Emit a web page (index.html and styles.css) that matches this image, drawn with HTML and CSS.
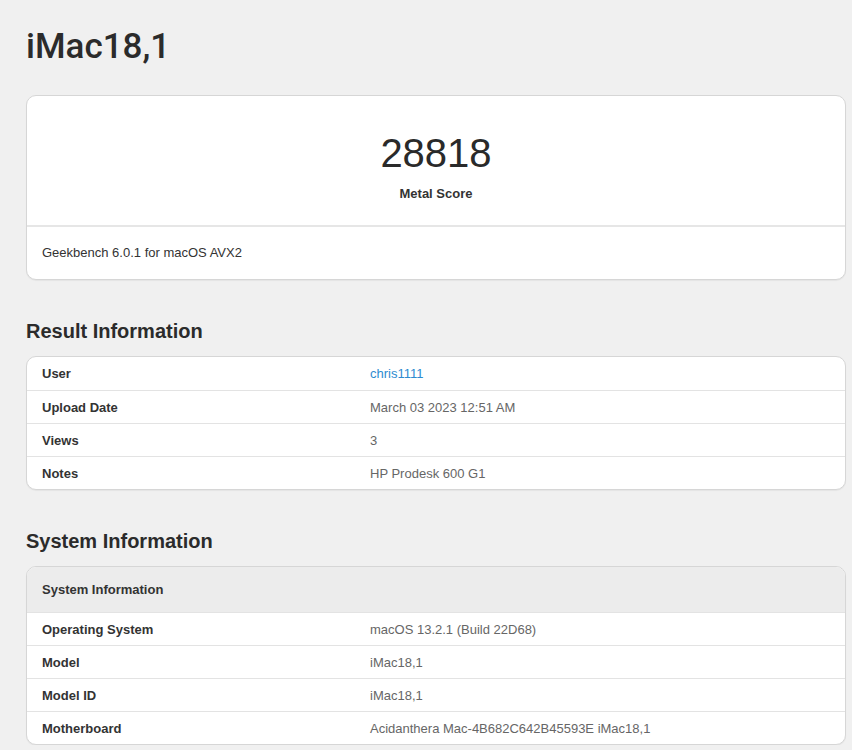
FILE: index.html
```html
<!DOCTYPE html>
<html lang="en">
<head>
	<meta charset="UTF-8">
	<title>iMac18,1 - Geekbench</title>
	<link rel="stylesheet" href="styles.css">
</head>
<body>
	<div class="page">
		<h1 class="title">iMac18,1</h1>

		<div class="card score-card">
			<div class="score-body">
				<div class="score">28818</div>
				<div class="score-label">Metal Score</div>
			</div>
			<div class="score-foot">Geekbench 6.0.1 for macOS AVX2</div>
		</div>

		<h3 class="section">Result Information</h3>
		<table class="card info">
			<tr><th>User</th><td><a href="#">chris1111</a></td></tr>
			<tr><th>Upload Date</th><td>March 03 2023 12:51 AM</td></tr>
			<tr><th>Views</th><td>3</td></tr>
			<tr><th>Notes</th><td>HP Prodesk 600 G1</td></tr>
		</table>

		<h3 class="section">System Information</h3>
		<table class="card info">
			<tr class="head"><th colspan="2">System Information</th></tr>
			<tr><th>Operating System</th><td>macOS 13.2.1 (Build 22D68)</td></tr>
			<tr><th>Model</th><td>iMac18,1</td></tr>
			<tr><th>Model ID</th><td>iMac18,1</td></tr>
			<tr><th>Motherboard</th><td>Acidanthera Mac-4B682C642B45593E iMac18,1</td></tr>
		</table>
	</div>
</body>
</html>
```

FILE: styles.css
```css
* {
	margin: 0;
	padding: 0;
	box-sizing: border-box;
}
body {
	background-color: #f0f0f0;
	color: #333;
	font-family: "Liberation Sans", Arial, sans-serif;
	font-size: 13px;
}
.page {
	padding: 24px 6px 0 26px;
}
.title {
	font-family: Roboto, "Liberation Sans", sans-serif;
	font-size: 35px;
	font-weight: 500;
	line-height: 46px;
	color: #2b2b2b;
	margin-bottom: 25px;
}
.card {
	background-color: #fff;
	border: 1px solid #d6d6d6;
	border-radius: 10px;
	box-shadow: 0 1px 1px rgba(0, 0, 0, 0.05);
	width: 820px;
}
.score-body {
	text-align: center;
	height: 131px;
	padding-top: 34px;
	border-bottom: 2px solid #e6e6e6;
}
.score {
	font-size: 40px;
	line-height: 46px;
	color: #2a2a2a;
}
.score-label {
	font-weight: bold;
	font-size: 13px;
	margin-top: 10px;
}
.score-foot {
	padding: 0 15px;
	height: 52px;
	line-height: 52px;
	color: #333;
}
.section {
	font-size: 20px;
	font-weight: bold;
	color: #2b2b2b;
	margin: 39px 0 13px;
	line-height: 24px;
}
table.info {
	border-collapse: separate;
	border-spacing: 0;
	overflow: hidden;
}
.info th,
.info td {
	height: 33px;
	padding: 0 15px;
	text-align: left;
	vertical-align: middle;
	border-top: 1px solid #e3e3e3;
}
.info tr:first-child th,
.info tr:first-child td {
	border-top: none;
}
.info th {
	width: 328px;
	font-weight: bold;
	color: #333;
}
.info td {
	color: #666;
}
.info a {
	color: #2e8bd0;
	text-decoration: none;
}
.info .head th {
	background-color: #ececec;
	height: 45px;
}
```
